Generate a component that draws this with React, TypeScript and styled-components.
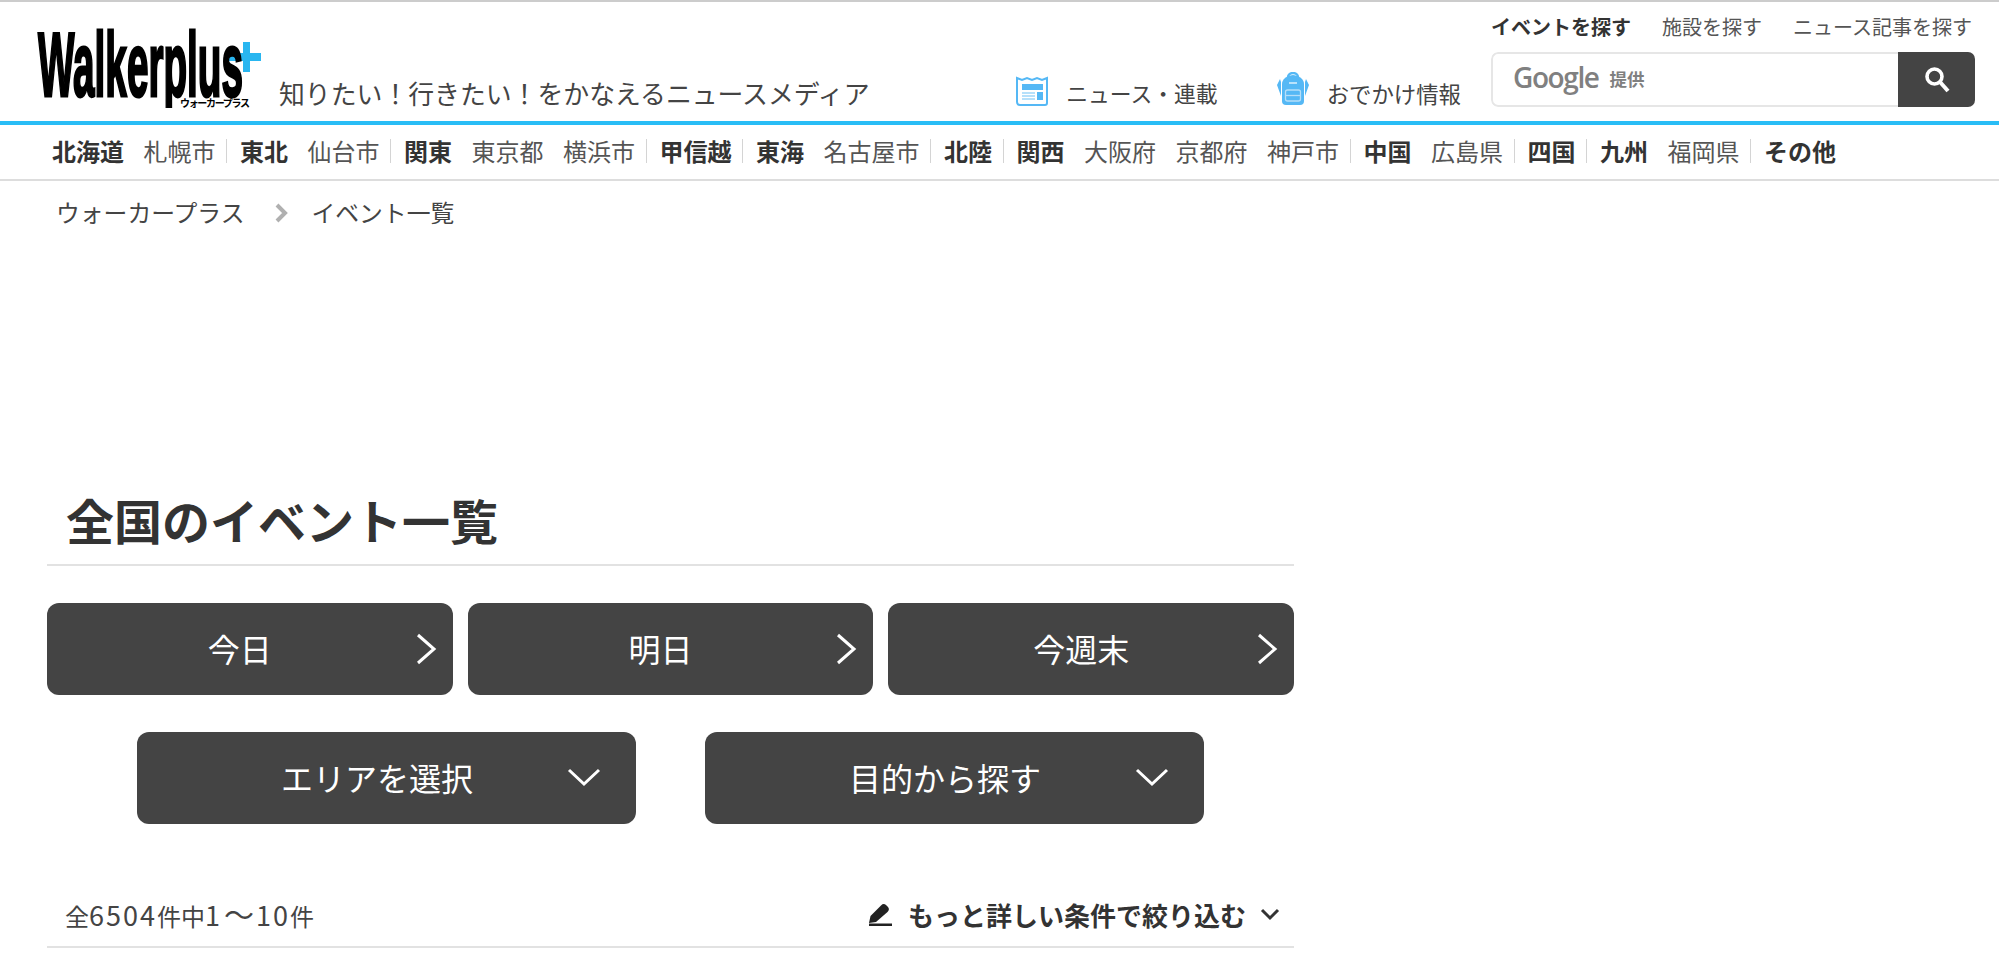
import React from "react"
import styled, { createGlobalStyle } from "styled-components"

const GlobalStyle = createGlobalStyle`
  html, body {
    margin: 0;
    padding: 0;
    background: #fff;
    color: #333;
    font-family: "Noto Sans CJK JP", "Noto Sans", sans-serif;
  }
`

const Header = styled.header`
  display: flex;
  align-items: flex-start;
  box-sizing: border-box;
  height: 121px;
  padding: 0 24px 0 37px;
  border-top: 2px solid #ccc;
`
const LogoMark = styled.svg`
  display: block;
  width: 224px;
  height: 78px;
  margin-top: 30px;
  flex: none;
  overflow: visible;
`
const Tagline = styled.p`
  margin: 74px 0 0 18px;
  font-size: 25.85px;
  line-height: 34px;
  color: #444;
  white-space: nowrap;
`
const HeaderNav = styled.nav`
  display: flex;
  margin: 71px 0 0 auto;
  gap: 59px;
`
const HeaderNavItem = styled.a`
  display: flex;
  align-items: flex-end;
  gap: 18px;
  height: 36px;
  font-size: 21.8px;
  line-height: 32px;
  color: #444;
  white-space: nowrap;
  svg {
    margin-bottom: 3px;
  }
`
const OutingNavItem = styled(HeaderNavItem)`
  font-size: 22.4px;
`
const RightColumn = styled.div`
  width: 484px;
  margin-left: 30px;
  flex: none;
`
const SearchTabs = styled.div`
  display: flex;
  gap: 31px;
  height: 50px;
  align-items: center;
`
const SearchTab = styled.a<{ $active?: boolean }>`
  font-size: 20px;
  line-height: 50px;
  height: 50px;
  margin-top: -1px;
  color: ${(p) => (p.$active ? "#333" : "#555")};
  font-weight: ${(p) => (p.$active ? 700 : 400)};
  white-space: nowrap;
`
const SearchBox = styled.div`
  display: flex;
  height: 55px;
  border-radius: 7px;
  overflow: hidden;
`
const SearchInput = styled.div`
  flex: 1;
  display: flex;
  align-items: center;
  gap: 11px;
  padding: 0 0 5px 20px;
  border: 2px solid #e6e6e6;
  border-right: 0;
  border-radius: 7px 0 0 7px;
  color: #808080;
`
const GoogleWord = styled.span`
  font-family: "Open Sans", "Liberation Sans", sans-serif;
  font-size: 28px;
  font-weight: 600;
  letter-spacing: -1.4px;
  line-height: 1;
`
const GoogleNote = styled.span`
  font-size: 17.5px;
  font-weight: 700;
  margin-top: 2px;
`
const SearchButton = styled.button`
  width: 77px;
  border: 0;
  padding: 0;
  background: #444;
  display: flex;
  align-items: center;
  justify-content: center;
`
const BlueLine = styled.div`
  height: 4px;
  background: #29bdf6;
`
const AreaNav = styled.nav`
  display: flex;
  align-items: center;
  box-sizing: border-box;
  height: 56px;
  padding: 0 0 3px 52px;
  border-bottom: 2px solid #ddd;
`
const AreaGroup = styled.div`
  display: flex;
  align-items: center;
  gap: 19.5px;
  & + & {
    margin-left: 10.5px;
    padding-left: 13px;
    border-left: 1px solid #d4d4d4;
  }
`
const AreaLink = styled.a<{ $strong?: boolean }>`
  font-size: 24px;
  line-height: 24px;
  color: ${(p) => (p.$strong ? "#333" : "#555")};
  font-weight: ${(p) => (p.$strong ? 700 : 400)};
  white-space: nowrap;
`
const Breadcrumb = styled.div`
  display: flex;
  align-items: center;
  height: 34px;
  margin-top: 13px;
  padding-left: 56px;
  font-size: 23.8px;
  color: #444;
  white-space: nowrap;
`
const CrumbArrow = styled.svg`
  width: 14px;
  height: 22px;
  margin: 4px 23px 0 30px;
`
const Main = styled.main`
  width: 1247px;
  margin: 266px 0 0 47px;
`
const PageTitle = styled.h1`
  margin: 0;
  height: 70px;
  padding: 0 0 0 19px;
  font-size: 48px;
  line-height: 50px;
  font-weight: 700;
  color: #333;
  border-bottom: 2px solid #e2e2e2;
`
const DayRow = styled.div`
  display: grid;
  grid-template-columns: repeat(3, 1fr);
  gap: 15px;
  margin-top: 37px;
`
const DarkButton = styled.a`
  position: relative;
  display: flex;
  align-items: center;
  justify-content: center;
  box-sizing: border-box;
  height: 92px;
  padding-bottom: 2px;
  border-radius: 12px;
  background: #444;
  color: #fff;
  font-size: 32px;
  white-space: nowrap;
`
const DayButton = styled(DarkButton)`
  padding-right: 20px;
`
const PickRow = styled.div`
  display: flex;
  justify-content: center;
  gap: 69px;
  margin-top: 37px;
`
const PickButton = styled(DarkButton)`
  width: 499px;
  padding-right: 19px;
`
const SideArrow = styled.svg`
  position: absolute;
  right: 16px;
  top: 30px;
  width: 22px;
  height: 32px;
`
const DownArrow = styled.svg`
  position: absolute;
  right: 35px;
  top: 35px;
  width: 34px;
  height: 20px;
`
const ResultBar = styled.div`
  display: flex;
  align-items: center;
  justify-content: space-between;
  box-sizing: border-box;
  height: 124px;
  padding: 58px 14px 0 18px;
  border-bottom: 2px solid #e2e2e2;
`
const ResultCount = styled.span`
  font-size: 24px;
  color: #444;
  white-space: nowrap;
`
const CountDigits = styled.span`
  font-size: 27px;
  letter-spacing: 2px;
`
const CountTilde = styled.span`
  font-size: 30px;
  line-height: 24px;
  margin: 0 2px;
`
const FilterLink = styled.a`
  display: flex;
  align-items: center;
  font-size: 26px;
  font-weight: 700;
  color: #333;
  white-space: nowrap;
`
const PenIcon = styled.svg`
  width: 25px;
  height: 24px;
  margin-right: 16px;
`
const FilterArrow = styled.svg`
  width: 20px;
  height: 14px;
  margin-left: 14px;
`

const areas = [
  ["北海道", "札幌市"],
  ["東北", "仙台市"],
  ["関東", "東京都", "横浜市"],
  ["甲信越"],
  ["東海", "名古屋市"],
  ["北陸"],
  ["関西", "大阪府", "京都府", "神戸市"],
  ["中国", "広島県"],
  ["四国"],
  ["九州", "福岡県"],
  ["その他"],
]

const Logo = () => (
  <LogoMark viewBox="0 0 224 78">
    <defs>
      <clipPath id="logo-crop">
        <rect x="-2" y="-4" width="220" height="80" />
      </clipPath>
    </defs>
    <rect x="206" y="10" width="7" height="30" fill="#29b6f0" />
    <rect x="192" y="21" width="32" height="8" fill="#29b6f0" />
    <g clipPath="url(#logo-crop)">
      <text
        x="1"
        y="64"
        fontFamily="Liberation Sans, sans-serif"
        fontWeight="700"
        fontSize="90"
        textLength="205"
        lengthAdjust="spacingAndGlyphs"
        fill="#000"
        stroke="#000"
        strokeWidth="3"
      >
        Walkerplus
      </text>
    </g>
    <text
      x="143"
      y="75"
      fontFamily="Noto Sans CJK JP, sans-serif"
      fontWeight="700"
      fontSize="10"
      textLength="70"
      lengthAdjust="spacing"
      fill="#000"
    >
      ウォーカープラス
    </text>
  </LogoMark>
)

const NewsIcon = () => (
  <svg width="32" height="30" viewBox="0 0 32 30" fill="none">
    <path
      d="M1 2 v24 a3 3 0 0 0 3 3 h25 a2 2 0 0 0 2 -2 V2 l-5 2 l-5 -2 l-5 2 l-5 -2 l-5 2 l-5 -2 z"
      stroke="#55b8f5"
      strokeWidth="2"
      fill="#fff"
    />
    <rect x="6" y="8" width="21" height="6" fill="#55b8f5" />
    <rect x="21" y="16" width="6" height="8" fill="#55b8f5" />
    <path d="M6 17 h13 M6 20 h13 M6 23 h13" stroke="#9ed6f9" strokeWidth="1.6" />
  </svg>
)

const PackIcon = () => (
  <svg width="32" height="34" viewBox="0 0 32 34" fill="none">
    <path d="M11 5 a5 4 0 0 1 10 0" stroke="#55b8f5" strokeWidth="2.4" />
    <path
      d="M5 12 a11 9 0 0 1 22 0 v17 a4 4 0 0 1 -4 4 h-14 a4 4 0 0 1 -4 -4 z"
      fill="#55b8f5"
    />
    <path d="M3 7 L0 13 L4 24 V10 z M29 7 L32 13 L28 24 V10 z" fill="#55b8f5" />
    <path d="M12 11 h8" stroke="#fff" strokeWidth="1.2" />
    <rect x="8.5" y="18" width="15" height="11" rx="2" stroke="#b5def9" strokeWidth="1.3" />
    <path d="M9 23.5 h14" stroke="#b5def9" strokeWidth="1.3" />
  </svg>
)

const ArrowRight = () => (
  <SideArrow viewBox="0 0 22 32" fill="none">
    <path d="M3 2 L19 16 L3 30" stroke="#fff" strokeWidth="3" />
  </SideArrow>
)

const ArrowDown = () => (
  <DownArrow viewBox="0 0 34 20" fill="none">
    <path d="M2 3 L17 17 L32 3" stroke="#fff" strokeWidth="3" />
  </DownArrow>
)

export default function App() {
  return (
    <>
      <GlobalStyle />
      <Header>
        <Logo />
        <Tagline>知りたい！行きたい！をかなえるニュースメディア</Tagline>
        <HeaderNav>
          <HeaderNavItem>
            <NewsIcon />
            ニュース・連載
          </HeaderNavItem>
          <OutingNavItem>
            <PackIcon />
            おでかけ情報
          </OutingNavItem>
        </HeaderNav>
        <RightColumn>
          <SearchTabs>
            <SearchTab $active>イベントを探す</SearchTab>
            <SearchTab>施設を探す</SearchTab>
            <SearchTab>ニュース記事を探す</SearchTab>
          </SearchTabs>
          <SearchBox>
            <SearchInput>
              <GoogleWord>Google</GoogleWord>
              <GoogleNote>提供</GoogleNote>
            </SearchInput>
            <SearchButton aria-label="検索">
              <svg width="26" height="28" viewBox="0 0 26 28" fill="none">
                <circle cx="10.5" cy="10.5" r="7.5" stroke="#fff" strokeWidth="3.6" />
                <path d="M16 16 L24 25" stroke="#fff" strokeWidth="4" />
              </svg>
            </SearchButton>
          </SearchBox>
        </RightColumn>
      </Header>
      <BlueLine />
      <AreaNav>
        {areas.map((group) => (
          <AreaGroup key={group[0]}>
            {group.map((name, i) => (
              <AreaLink key={name} $strong={i === 0}>
                {name}
              </AreaLink>
            ))}
          </AreaGroup>
        ))}
      </AreaNav>
      <Breadcrumb>
        ウォーカープラス
        <CrumbArrow viewBox="0 0 14 22" fill="none">
          <path d="M3 3 L11 11 L3 19" stroke="#b0b0b0" strokeWidth="4" />
        </CrumbArrow>
        イベント一覧
      </Breadcrumb>
      <Main>
        <PageTitle>全国のイベント一覧</PageTitle>
        <DayRow>
          {["今日", "明日", "今週末"].map((label) => (
            <DayButton key={label}>
              {label}
              <ArrowRight />
            </DayButton>
          ))}
        </DayRow>
        <PickRow>
          {["エリアを選択", "目的から探す"].map((label) => (
            <PickButton key={label}>
              {label}
              <ArrowDown />
            </PickButton>
          ))}
        </PickRow>
        <ResultBar>
          <ResultCount>
            全<CountDigits>6504</CountDigits>件中<CountDigits>1</CountDigits>
            <CountTilde>〜</CountTilde>
            <CountDigits>10</CountDigits>件
          </ResultCount>
          <FilterLink>
            <PenIcon viewBox="0 0 25 24">
              <path
                d="M2 21 L3.5 14 L14 3.5 Q16.5 1 19 3 L21 5 Q23 7.5 20.5 10 L9 20 z"
                fill="#222"
              />
              <rect x="2" y="21.5" width="23" height="2.5" fill="#222" />
            </PenIcon>
            もっと詳しい条件で絞り込む
            <FilterArrow viewBox="0 0 20 14" fill="none">
              <path d="M2 3 L10 11 L18 3" stroke="#333" strokeWidth="3" />
            </FilterArrow>
          </FilterLink>
        </ResultBar>
      </Main>
    </>
  )
}
